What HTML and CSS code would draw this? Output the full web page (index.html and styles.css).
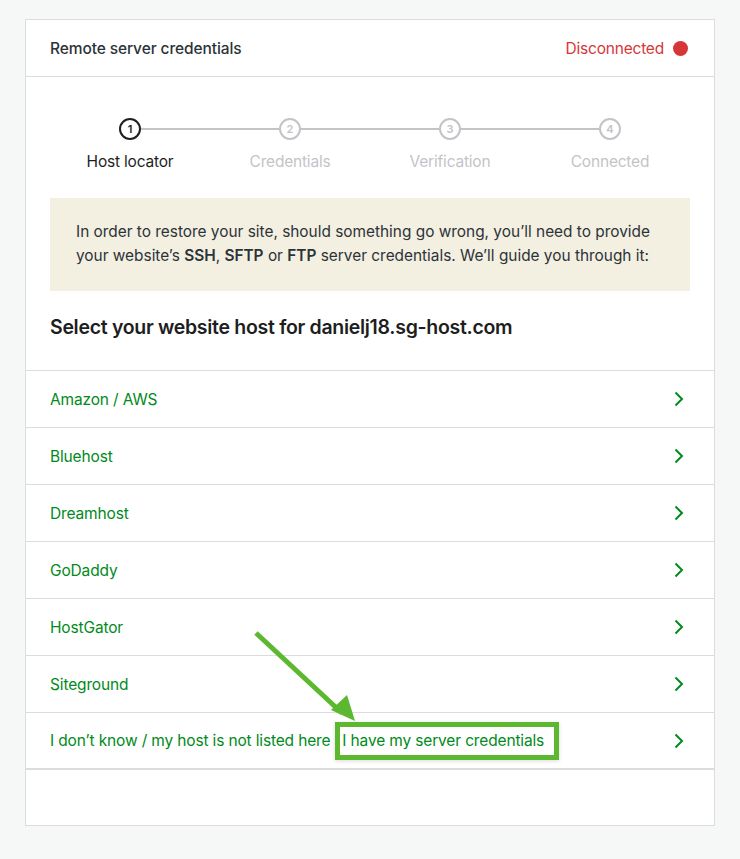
FILE: index.html
```html
<!DOCTYPE html>
<html lang="en">
<head>
<meta charset="utf-8">
<title>Remote server credentials</title>
<link rel="stylesheet" href="styles.css">
</head>
<body>
<div class="card">
  <div class="card-header">
    <h2 class="card-title">Remote server credentials</h2>
    <div class="status">Disconnected <span class="status-dot"></span></div>
  </div>
  <div class="card-body">
    <ol class="stepper">
      <li class="step active"><span class="step-num">1</span><span class="step-label">Host locator</span></li>
      <li class="step"><span class="step-num">2</span><span class="step-label">Credentials</span></li>
      <li class="step"><span class="step-num">3</span><span class="step-label">Verification</span></li>
      <li class="step"><span class="step-num">4</span><span class="step-label">Connected</span></li>
    </ol>
    <p class="notice"><span>In order to restore your site, should something go wrong, you’ll need to provide</span><br><span>your website’s </span><b>SSH</b><span>, </span><b>SFTP</b><span> or </span><b>FTP</b><span> server credentials. We’ll guide you through it:</span></p>
    <h3 class="host-title">Select your website host for danielj18.sg-host.com</h3>
  </div>
  <ul class="host-list">
    <li class="host-row"><span>Amazon / AWS</span><svg class="chev" viewBox="0 0 10 16"><path d="M1.5 1.5 L8 8 L1.5 14.5"/></svg></li>
    <li class="host-row"><span>Bluehost</span><svg class="chev" viewBox="0 0 10 16"><path d="M1.5 1.5 L8 8 L1.5 14.5"/></svg></li>
    <li class="host-row"><span>Dreamhost</span><svg class="chev" viewBox="0 0 10 16"><path d="M1.5 1.5 L8 8 L1.5 14.5"/></svg></li>
    <li class="host-row"><span>GoDaddy</span><svg class="chev" viewBox="0 0 10 16"><path d="M1.5 1.5 L8 8 L1.5 14.5"/></svg></li>
    <li class="host-row"><span>HostGator</span><svg class="chev" viewBox="0 0 10 16"><path d="M1.5 1.5 L8 8 L1.5 14.5"/></svg></li>
    <li class="host-row"><span>Siteground</span><svg class="chev" viewBox="0 0 10 16"><path d="M1.5 1.5 L8 8 L1.5 14.5"/></svg></li>
    <li class="host-row"><span class="row-text"><span>I don’t know / my host is not listed here</span><span class="highlight">I have my server credentials</span></span><svg class="chev" viewBox="0 0 10 16"><path d="M1.5 1.5 L8 8 L1.5 14.5"/></svg></li>
  </ul>
  <div class="card-footer"></div>
  <svg class="arrow" viewBox="0 0 120 100" width="120" height="100">
    <line x1="4" y1="4" x2="90" y2="84" />
    <polygon points="79,81 95,66 103,92" />
  </svg>
</div>
</body>
</html>
```

FILE: styles.css
```css
* { box-sizing: border-box; }
html, body { margin: 0; padding: 0; }
body {
  background: #f6f7f7;
  padding: 19px 25px 32px;
  font-family: Inter, "Noto Sans", "Liberation Sans", sans-serif;
  color: #1e1e1e;
}
.card {
  position: relative;
  background: #fff;
  border: 1px solid #dcdcde;
}
.card-header {
  height: 57px;
  border-bottom: 1px solid #dcdcde;
  display: flex;
  align-items: center;
  justify-content: space-between;
  padding: 0 26px 0 24px;
}
.card-title {
  margin: 0;
  font-size: 15.5px;
  font-weight: 500;
  color: #2c3338;
  letter-spacing: -0.1px;
}
.status {
  display: flex;
  align-items: center;
  gap: 9px;
  color: #d63638;
  font-size: 15.5px;
  letter-spacing: -0.2px;
}
.status-dot {
  width: 15px;
  height: 15px;
  border-radius: 50%;
  background: #d63638;
}
.card-body {
  padding: 41px 24px 0;
}
.stepper {
  list-style: none;
  margin: 0;
  padding: 0;
  display: grid;
  grid-template-columns: repeat(4, 1fr);
}
.step {
  position: relative;
  display: flex;
  flex-direction: column;
  align-items: center;
}
.step:not(:last-child)::after {
  content: "";
  position: absolute;
  top: 10px;
  left: calc(50% + 11px);
  width: calc(100% - 22px);
  height: 2px;
  background: #c3c4c7;
}
.step-num {
  width: 22px;
  height: 22px;
  border-radius: 50%;
  border: 2px solid #c3c4c7;
  color: #c3c4c7;
  font-size: 11px;
  font-weight: 600;
  display: flex;
  align-items: center;
  justify-content: center;
  background: #fff;
}
.step-label {
  margin-top: 10px;
  font-size: 15.5px;
  line-height: 24px;
  color: #c3c4c7;
  letter-spacing: -0.2px;
}
.step.active .step-num {
  border-color: #1e1e1e;
  color: #1e1e1e;
}
.step.active .step-label { color: #1e1e1e; }
.notice {
  margin: 24px 0 0;
  background: #f3efe1;
  padding: 22px 26px 23px;
  font-size: 15.4px;
  line-height: 24px;
  color: #2c3338;
}
.notice b { font-weight: 600; }
.host-title {
  margin: 22px 0 0;
  font-size: 19.5px;
  line-height: 28px;
  font-weight: 600;
  color: #1e1e1e;
  letter-spacing: -0.3px;
  padding-bottom: 29px;
}
.host-list {
  list-style: none;
  margin: 0;
  padding: 0;
}
.host-row {
  height: 57px;
  border-top: 1px solid #dcdcde;
  display: flex;
  align-items: center;
  justify-content: space-between;
  padding: 0 30px 0 24px;
  color: #008a20;
  font-size: 15.5px;
  letter-spacing: -0.15px;
}
.host-row:last-child { border-bottom: 2px solid #dcdcde; height: 58px; }
.row-text {
  display: flex;
  align-items: center;
  gap: 5px;
}
.chev {
  width: 10px;
  height: 16px;
  fill: none;
  stroke: #008a20;
  stroke-width: 2;
}
.highlight {
  display: inline-block;
  border: 5px solid #5cb82e;
  padding: 4px 10px 4px 2px;
  line-height: 20px;
  box-shadow: 0 1px 4px rgba(0,0,0,0.15);
}
.card-footer { height: 55px; }
.arrow {
  position: absolute;
  left: 226px;
  top: 609px;
  overflow: visible;
}
.arrow line {
  stroke: #5cb82e;
  stroke-width: 5;
}
.arrow polygon { fill: #5cb82e; }
```
